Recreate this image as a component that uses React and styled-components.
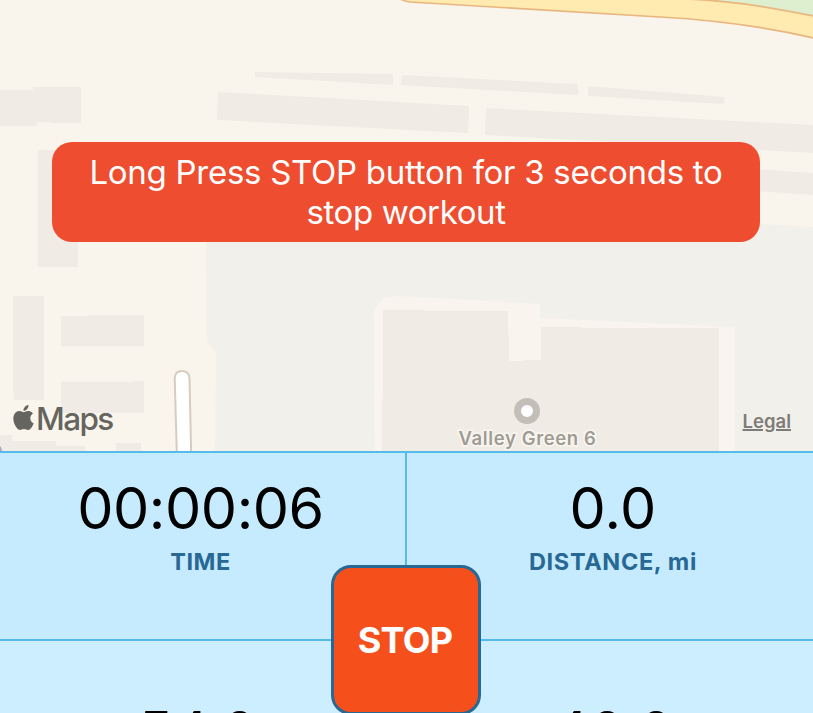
import React from 'react';
import styled, { createGlobalStyle } from 'styled-components';
import { SiApple } from 'react-icons/si';

const GlobalStyle = createGlobalStyle`
  * { box-sizing: border-box; }
  html, body { margin: 0; overflow: hidden; }
  body { font-family: Inter, "Liberation Sans", sans-serif; }
`;

const Screen = styled.main`
  display: grid;
  grid-template-rows: 451px 262px;
  width: 813px;
  height: 713px;
  overflow: hidden;
`;

const MapPane = styled.section`
  position: relative;
  display: flex;
  flex-direction: column;
  justify-content: space-between;
  background: #f9f5ed;
  overflow: hidden;
`;

const MapCanvas = styled.svg`
  position: absolute;
  inset: 0;
  width: 813px;
  height: 451px;
`;

const Banner = styled.div`
  position: relative;
  display: flex;
  flex-direction: column;
  align-items: center;
  justify-content: center;
  width: 708px;
  height: 100px;
  margin: 142px 0 0 52px;
  border-radius: 20px;
  background: #ee4d2f;
  color: #fff;
  font-size: 33px;
  line-height: 40px;
`;

const BannerLine = styled.span`
  white-space: nowrap;
  letter-spacing: ${(p) => p.$spacing};
`;

const MapFooter = styled.div`
  position: relative;
  display: flex;
  justify-content: space-between;
  align-items: flex-start;
  height: 51px;
  padding: 0 22px 0 11px;
`;

const MapsBrand = styled.div`
  display: flex;
  align-items: center;
  height: 36px;
  color: #65645f;
  font-size: 31.5px;
  font-weight: 500;
  letter-spacing: -1.6px;

  svg {
    margin-bottom: 2px;
  }
`;

const Legal = styled.a`
  margin-top: 9px;
  color: #7d7c78;
  font-size: 18.5px;
  line-height: 24px;
  font-weight: 600;
  text-decoration: underline;
  text-decoration-thickness: 2px;
  text-underline-offset: 1px;
  text-decoration-skip-ink: auto;
`;

const Pin = styled.div`
  position: absolute;
  left: 427px;
  top: 398px;
  width: 200px;
  display: flex;
  flex-direction: column;
  align-items: center;
`;

const PinDot = styled.span`
  width: 26px;
  height: 26px;
  border: 7px solid #c3bfb8;
  border-radius: 50%;
  background: #fff;
`;

const PinLabel = styled.span`
  margin-top: 2px;
  margin-left: 1px;
  color: #9f9b95;
  font-size: 18.5px;
  font-weight: 600;
  line-height: 24px;
  letter-spacing: 0.62px;
  white-space: nowrap;
  -webkit-text-stroke: 3px #f9f6f0;
  paint-order: stroke fill;
`;

const Stats = styled.section`
  position: relative;
  display: grid;
  grid-template-columns: 405px 408px;
  grid-template-rows: 188px 188px;
  overflow: hidden;
`;

const Stat = styled.div`
  display: flex;
  flex-direction: column;
  align-items: center;
  border-top: 2px solid #54bbea;
  border-left: ${(p) => (p.$divided ? '2px solid #54bbea' : '0')};
  padding-top: ${(p) => (p.$lower ? '56px' : '20px')};
  padding-left: ${(p) => (p.$divided ? '6px' : '0')};
  padding-right: ${(p) => (p.$divided ? '0' : p.$lower ? '10px' : '4px')};
  background: ${(p) => (p.$lower ? '#cdeeff' : '#c6ebff')};
`;

const Value = styled.div`
  height: 70px;
  line-height: 70px;
  font-size: 57.5px;
  letter-spacing: ${(p) => p.$spacing || '-0.45px'};
  color: #000;
  white-space: nowrap;
`;

const Caption = styled.div`
  margin-top: 4px;
  line-height: 30px;
  font-size: 23.5px;
  font-weight: 700;
  letter-spacing: ${(p) => p.$spacing || '0.5px'};
  color: #276894;
`;

const StopButton = styled.button`
  position: absolute;
  left: 331px;
  top: 114px;
  width: 150px;
  height: 150px;
  padding: 0 2px 0 0;
  border: 3px solid #276894;
  border-radius: 20px;
  background: #f5501c;
  color: #fff;
  font: 700 36px Inter, "Liberation Sans", sans-serif;
  letter-spacing: -0.8px;
`;

const buildings = [
  '0,90 33,90 33,87 81,87 81,123 51,123 51,122 37,122 37,126 0,126',
  '38,150 78,150 78,267 38,267',
  '13,296 44,296 44,400 14,400 14,393 13,393',
  '61,316 89,316 89,315 144,315 144,346 61,346',
  '61,382 133,382 133,381 144,381 144,413 61,413',
  '0,435 12,435 12,441 56,441 56,446 85,446 85,451 0,451',
  '116,443 141,443 141,451 116,451',
  '255,72 393,74 393,85 255,77',
  '402,75 578,84 578,95 401,85',
  '588,86 725,97 724,104 588,96',
  '218,92 469,106 468,133 217,120',
  '486,108 813,125 813,153 485,135',
  '740,168 813,173 813,195 740,190',
];

function MapArt() {
  return (
    <MapCanvas viewBox="0 0 813 451" aria-hidden="true">
      <path d="M206 238H700L760 224L813 227V451H215L216 353L207 341Z" fill="#f1f0eb" />
      <path d="M375 451L374 311L383 298L397 296L540 304V318L735 327V451Z" fill="#f9f4ed" />
      <path d="M383 310H425V311H508V335H509V361H524V360H541V327H582V328H719V451H382V399H383Z" fill="#f0ebe4" />
      {buildings.map((points) => (
        <polygon key={points} points={points} fill="#f0ebe4" />
      ))}
      <path d="M680 -12V-1Q754 2 813 16V-12Z" fill="#deefd0" />
      <path
        d="M396 -4Q402 1 410 2L660 17Q748 22 820 39.500V17.500Q745 1 686 -1L630 -8Z"
        fill="#ffeab0"
        stroke="#e8b67e"
        strokeWidth="1.7"
      />
      <path d="M177 460L174.700 378Q175 371 182 371Q189 371 189.500 378L191.300 460Z" fill="#fff" stroke="#d6cdc0" strokeWidth="2" />
      <path d="M0 446Q2 448 2 451H0Z" fill="#a5a8c6" />
    </MapCanvas>
  );
}

export default function App() {
  return (
    <Screen>
      <GlobalStyle />
      <MapPane>
        <MapArt />
        <Banner>
          <BannerLine $spacing="-0.28px">Long Press STOP button for 3 seconds to</BannerLine>
          <BannerLine $spacing="-0.38px">stop workout</BannerLine>
        </Banner>
        <Pin>
          <PinDot />
          <PinLabel>Valley Green 6</PinLabel>
        </Pin>
        <MapFooter>
          <MapsBrand>
            <SiApple size={25} />
            Maps
          </MapsBrand>
          <Legal>Legal</Legal>
        </MapFooter>
      </MapPane>
      <Stats>
        <Stat>
          <Value>00:00:06</Value>
          <Caption>TIME</Caption>
        </Stat>
        <Stat $divided>
          <Value $spacing="0.2px">0.0</Value>
          <Caption $spacing="0.65px">DISTANCE, mi</Caption>
        </Stat>
        <Stat $lower>
          <Value>54.0</Value>
        </Stat>
        <Stat $lower $divided>
          <Value>40.0</Value>
        </Stat>
        <StopButton>STOP</StopButton>
      </Stats>
    </Screen>
  );
}
